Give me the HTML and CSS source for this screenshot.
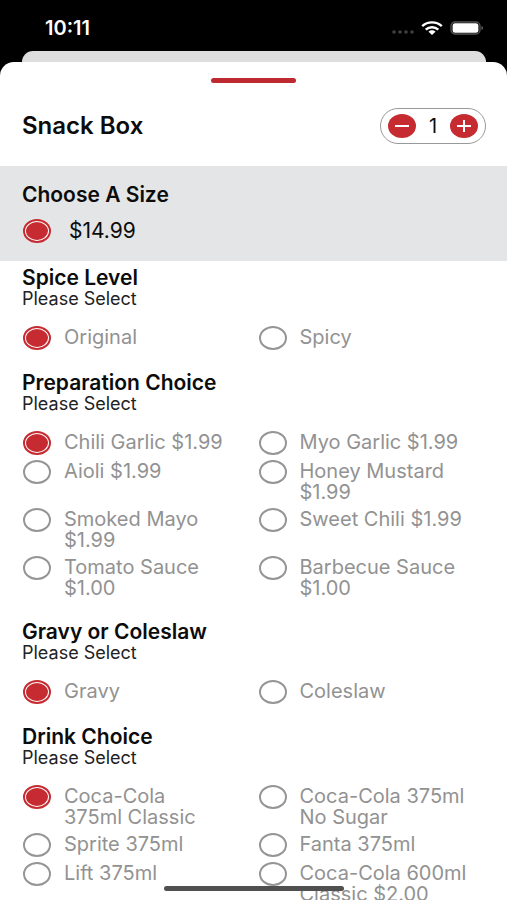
FILE: index.html
```html
<!DOCTYPE html>
<html lang="en">
<head>
<meta charset="utf-8">
<meta name="viewport" content="width=device-width, initial-scale=1">
<title>Snack Box</title>
<link rel="stylesheet" href="styles.css">
</head>
<body>
<header class="status">
  <span class="time">10:11</span>
  <span class="status-icons">
    <svg width="24" height="6" viewBox="0 0 24 6" aria-hidden="true"><g fill="#404040"><circle cx="4" cy="3" r="1.800"/><circle cx="10" cy="3" r="1.800"/><circle cx="16" cy="3" r="1.800"/><circle cx="22" cy="3" r="1.800"/></g></svg>
    <svg width="22" height="14" viewBox="0 0 22 14" aria-hidden="true"><g fill="none" stroke="#fff" stroke-width="2.400"><path d="M1.200 5.100C6.600.1 15.400.1 20.800 5.100"/><path d="M4.700 8.700C8.300 5.400 13.700 5.400 17.300 8.700"/></g><path d="M7.500 10.700c2-1.900 5-1.900 7 0L11 13.900z" fill="#fff"/></svg>
    <svg width="34" height="14" viewBox="0 0 34 14" aria-hidden="true"><rect x="1" y="1" width="29" height="12" rx="4" fill="none" stroke="#555" stroke-width="1.300"/><rect x="2.600" y="2.300" width="25.800" height="9.400" rx="2.500" fill="#fff"/><path d="M31.500 5v4q1.600-.6 1.600-2t-1.600-2z" fill="#666"/></svg>
  </span>
</header>
<div class="back-sheet"></div>
<main class="sheet">
  <div class="grabber"></div>
  <div class="product">
    <h1>Snack Box</h1>
    <div class="stepper">
      <button type="button" aria-label="Decrease quantity"><svg width="16" height="14" viewBox="0 0 16 14"><path d="M1 7h14" stroke="#fff" stroke-width="2"/></svg></button>
      <output>1</output>
      <button type="button" aria-label="Increase quantity"><svg width="16" height="14" viewBox="0 0 16 14"><path d="M1 7h14M8 1v12" stroke="#fff" stroke-width="2"/></svg></button>
    </div>
  </div>
  <section class="size">
    <h2>Choose A Size</h2>
    <label class="price"><input type="radio" name="size" checked><span>$14.99</span></label>
  </section>
  <div class="groups">
    <section class="group">
      <h2>Spice Level</h2>
      <p>Please Select</p>
      <div class="options">
        <label><input type="radio" name="spice" checked><span>Original</span></label>
        <label><input type="radio" name="spice"><span>Spicy</span></label>
      </div>
    </section>
    <section class="group">
      <h2>Preparation Choice</h2>
      <p>Please Select</p>
      <div class="options">
        <label><input type="radio" name="prep" checked><span>Chili Garlic $1.99</span></label>
        <label><input type="radio" name="prep"><span>Myo Garlic $1.99</span></label>
        <label><input type="radio" name="prep"><span>Aioli $1.99</span></label>
        <label><input type="radio" name="prep"><span>Honey Mustard<br>$1.99</span></label>
        <label><input type="radio" name="prep"><span>Smoked Mayo<br>$1.99</span></label>
        <label><input type="radio" name="prep"><span>Sweet Chili $1.99</span></label>
        <label><input type="radio" name="prep"><span>Tomato Sauce<br>$1.00</span></label>
        <label><input type="radio" name="prep"><span>Barbecue Sauce<br>$1.00</span></label>
      </div>
    </section>
    <section class="group">
      <h2>Gravy or Coleslaw</h2>
      <p>Please Select</p>
      <div class="options">
        <label><input type="radio" name="side" checked><span>Gravy</span></label>
        <label><input type="radio" name="side"><span>Coleslaw</span></label>
      </div>
    </section>
    <section class="group">
      <h2>Drink Choice</h2>
      <p>Please Select</p>
      <div class="options">
        <label><input type="radio" name="drink" checked><span>Coca-Cola<br>375ml Classic</span></label>
        <label><input type="radio" name="drink"><span>Coca-Cola 375ml<br>No Sugar</span></label>
        <label><input type="radio" name="drink"><span>Sprite 375ml</span></label>
        <label><input type="radio" name="drink"><span>Fanta 375ml</span></label>
        <label><input type="radio" name="drink"><span>Lift 375ml</span></label>
        <label><input type="radio" name="drink"><span>Coca-Cola 600ml<br>Classic $2.00</span></label>
      </div>
    </section>
  </div>
</main>
<div class="home-indicator"></div>
</body>
</html>
```
FILE: styles.css
```css
* { box-sizing: border-box; }

body {
  margin: 0;
  height: 100vh;
  overflow: hidden;
  display: flex;
  flex-direction: column;
  background: #000;
  color: #0c0c0c;
  font-family: Inter, "Liberation Sans", sans-serif;
  font-size: 20px;
}

h1, h2, p { margin: 0; }

.status {
  flex: none;
  display: flex;
  align-items: center;
  justify-content: space-between;
  height: 51px;
  padding: 4px 23px 0 45px;
  color: #fff;
}

.time {
  font-size: 20px;
  font-weight: 600;
}

.status-icons {
  display: flex;
  align-items: center;
  gap: 7px;
}

.status-icons svg:first-child {
  margin-top: 9px;
}

.back-sheet {
  flex: none;
  height: 11px;
  margin: 0 21px 0 22px;
  border-radius: 12px 12px 0 0;
  background: #dedede;
}

.sheet {
  flex: 1;
  min-height: 0;
  overflow: hidden;
  padding-top: 16px;
  border-radius: 14px 14px 0 0;
  background: #fff;
}

.grabber {
  width: 85px;
  height: 5px;
  margin: 0 auto;
  border-radius: 3px;
  background: #be2a30;
}

.product {
  display: flex;
  align-items: center;
  justify-content: space-between;
  padding: 25px 21px 22px 22px;
}

h1 {
  font-size: 24px;
  font-weight: 600;
  line-height: 28px;
}

.stepper {
  display: flex;
  align-items: center;
  justify-content: space-between;
  width: 106px;
  height: 36px;
  padding: 0 7px;
  border: 1px solid #999;
  border-radius: 18px;
}

.stepper button {
  display: grid;
  place-items: center;
  width: 28px;
  height: 24px;
  padding: 0;
  border: 0;
  border-radius: 50%;
  background: #c52b30;
}

h2 {
  font-size: 21px;
  font-weight: 600;
  line-height: 21px;
}

.size {
  padding: 18px 22px;
  background: #e4e5e7;
}

.price {
  display: flex;
  align-items: center;
  gap: 18px;
  margin-top: 14px;
  padding-left: 1px;
  font-size: 21px;
  line-height: 24px;
}

.groups {
  padding: 6px 14px 0 22px;
}

.group {
  margin-bottom: 22px;
}

.group p {
  font-size: 18px;
  line-height: 21px;
  color: #222;
}

.options {
  display: grid;
  grid-template-columns: 1fr 1fr;
  row-gap: 5px;
  margin-top: 17px;
}

.options label {
  display: flex;
  align-items: flex-start;
  gap: 13px;
  padding-left: 1px;
  line-height: 21px;
  color: #929292;
}

.options span {
  padding-top: 1px;
}

input[type="radio"] {
  appearance: none;
  flex: none;
  width: 28px;
  height: 24px;
  margin: 0;
  border: 2px solid #959595;
  border-radius: 50%;
}

input[type="radio"]:checked {
  padding: 1px;
  border-color: #c52b30;
  background: #fff;
}

input[type="radio"]:checked::before {
  content: "";
  display: block;
  height: 100%;
  border-radius: 50%;
  background: #c52b30;
}

.home-indicator {
  position: fixed;
  bottom: 9px;
  left: 50%;
  width: 180px;
  height: 5px;
  margin-left: -90px;
  border-radius: 3px;
  background: #505050;
}
```
